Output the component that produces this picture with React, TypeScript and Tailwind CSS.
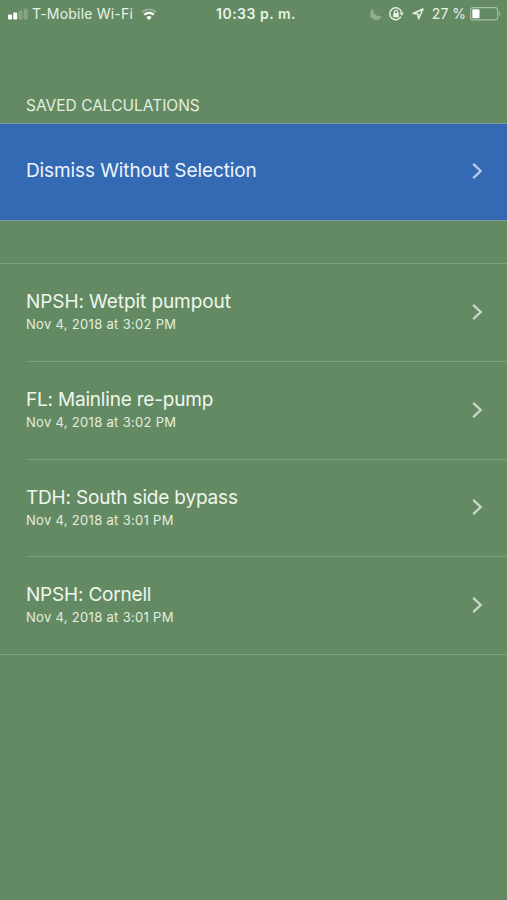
type Calculation = {
  title: string
  date: string
  titleClass: string
  rowClass: string
}

const calculations: Calculation[] = [
  {
    title: "NPSH: Wetpit pumpout",
    date: "Nov 4, 2018 at 3:02 PM",
    titleClass: "tracking-[-0.08px]",
    rowClass: "h-[98px]",
  },
  {
    title: "FL: Mainline re-pump",
    date: "Nov 4, 2018 at 3:02 PM",
    titleClass: "tracking-[-0.2px]",
    rowClass: "h-[98px]",
  },
  {
    title: "TDH: South side bypass",
    date: "Nov 4, 2018 at 3:01 PM",
    titleClass: "tracking-[-0.18px]",
    rowClass: "h-[97px]",
  },
  {
    title: "NPSH: Cornell",
    date: "Nov 4, 2018 at 3:01 PM",
    titleClass: "tracking-[-0.2px]",
    rowClass: "h-[97px]",
  },
]

function Chevron() {
  return (
    <svg width="12" height="18" viewBox="0 0 12 18" fill="none" className="mb-0.5 shrink-0 text-white/65">
      <path d="M2.2 1.8l7.5 7.2-7.5 7.2" stroke="currentColor" strokeWidth="2.3" />
    </svg>
  )
}

function StatusBar() {
  return (
    <header className="grid h-7 grid-cols-[1fr_auto_1fr] items-center pl-2 pr-1.5 text-[14px] leading-7 text-[#e6f2e4]">
      <div className="flex items-center">
        <svg width="20" height="12" viewBox="0 0 20 12" fill="currentColor" className="mr-1">
          <rect x="0" y="6.5" width="4" height="5" rx="1" fill="white" />
          <rect x="5.2" y="4.5" width="4" height="7" rx="1" fill="white" />
          <rect x="10.4" y="2.5" width="4" height="9" rx="1" opacity="0.25" />
          <rect x="15.6" y="0.5" width="4" height="11" rx="1" opacity="0.25" />
        </svg>
        <span className="tracking-[0.2px]">T-Mobile Wi-Fi</span>
        <svg width="16" height="12" viewBox="0 0 16 12" fill="none" stroke="currentColor" className="ml-2">
          <path d="M1 4.3a10 10 0 0 1 14 0" strokeWidth="1.9" opacity="0.35" />
          <path d="M3.3 6.8a6.6 6.6 0 0 1 9.4 0" stroke="white" strokeWidth="2.3" />
          <path d="M8 12 5.4 9.4a3.6 3.6 0 0 1 5.2 0z" fill="white" stroke="none" />
        </svg>
      </div>

      <span className="pl-[3px] font-semibold tracking-[0.5px]">10:33 p. m.</span>

      <div className="flex items-center justify-end">
        <svg width="12" height="12" viewBox="0 0 12 12" fill="currentColor" className="mr-[7px] opacity-35">
          <path d="M3.2.6C2.6 4.8 5.8 8.9 11.6 8.2A6 6 0 1 1 3.2.6z" />
        </svg>
        <svg width="15" height="14" viewBox="0 0 15 14" fill="none" stroke="currentColor" className="mr-2">
          <path d="M12 9.7A6 6 0 1 1 12.5 5" strokeWidth="1.4" />
          <path d="M10.3 5.6h4.6l-2.2 3.2z" fill="currentColor" stroke="none" />
          <rect x="4.2" y="6" width="5.6" height="4.3" rx="0.6" fill="currentColor" stroke="none" />
          <path d="M5.3 6.5V5a1.7 1.7 0 0 1 3.4 0v1.5" strokeWidth="1.2" />
        </svg>
        <svg width="12" height="12" viewBox="0 0 12 12" fill="none" stroke="currentColor" className="mr-2">
          <path d="M11 1 1.2 5.5l4.7.6.7 4.7z" strokeWidth="1.5" strokeLinejoin="round" />
        </svg>
        <span className="mr-1 whitespace-nowrap">27 %</span>
        <svg width="31" height="14" viewBox="0 0 31 14" fill="none">
          <rect x="0.6" y="0.6" width="27" height="12.3" rx="2.5" stroke="currentColor" strokeWidth="1.1" opacity="0.5" />
          <rect x="2.3" y="2.3" width="7.2" height="9" rx="1" fill="white" />
          <path d="M29 4.5c1.6.4 1.6 4.1 0 4.5z" fill="currentColor" opacity="0.5" />
        </svg>
      </div>
    </header>
  )
}

export default function App() {
  return (
    <div className="h-[900px] w-[507px] overflow-hidden bg-[#648a64] font-['Inter','Liberation_Sans',sans-serif] text-[#eef7ec]">
      <StatusBar />

      <main>
        <h2 className="mt-[65px] h-[30px] pl-[26px] text-[15.5px] leading-[26px] font-normal text-[#e2efdf]">
          SAVED CALCULATIONS
        </h2>

        <button
          type="button"
          className="flex h-[98px] w-full items-center justify-between border-y border-[#7c9e96] bg-[#346ab3] pr-6 pl-[26px] text-left text-[19px] text-[#edf4fd]"
        >
          <span className="pb-0.5 tracking-[-0.1px]">Dismiss Without Selection</span>
          <Chevron />
        </button>

        <ul className="mt-[42px] border-y border-[#7c9f7c]">
          {calculations.map((item, index) => (
            <li key={item.title} className={`pl-[26px] ${item.rowClass}`}>
              <div
                className={`flex h-full items-center justify-between pr-6 ${
                  index < calculations.length - 1 ? "border-b border-[#7c9f7c]" : ""
                }`}
              >
                <div>
                  <p className={`text-[19px] leading-6 ${item.titleClass}`}>{item.title}</p>
                  <p className="text-[13px] leading-[21px] tracking-[0.31px] text-[#e2efdf]">{item.date}</p>
                </div>
                <Chevron />
              </div>
            </li>
          ))}
        </ul>
      </main>
    </div>
  )
}
